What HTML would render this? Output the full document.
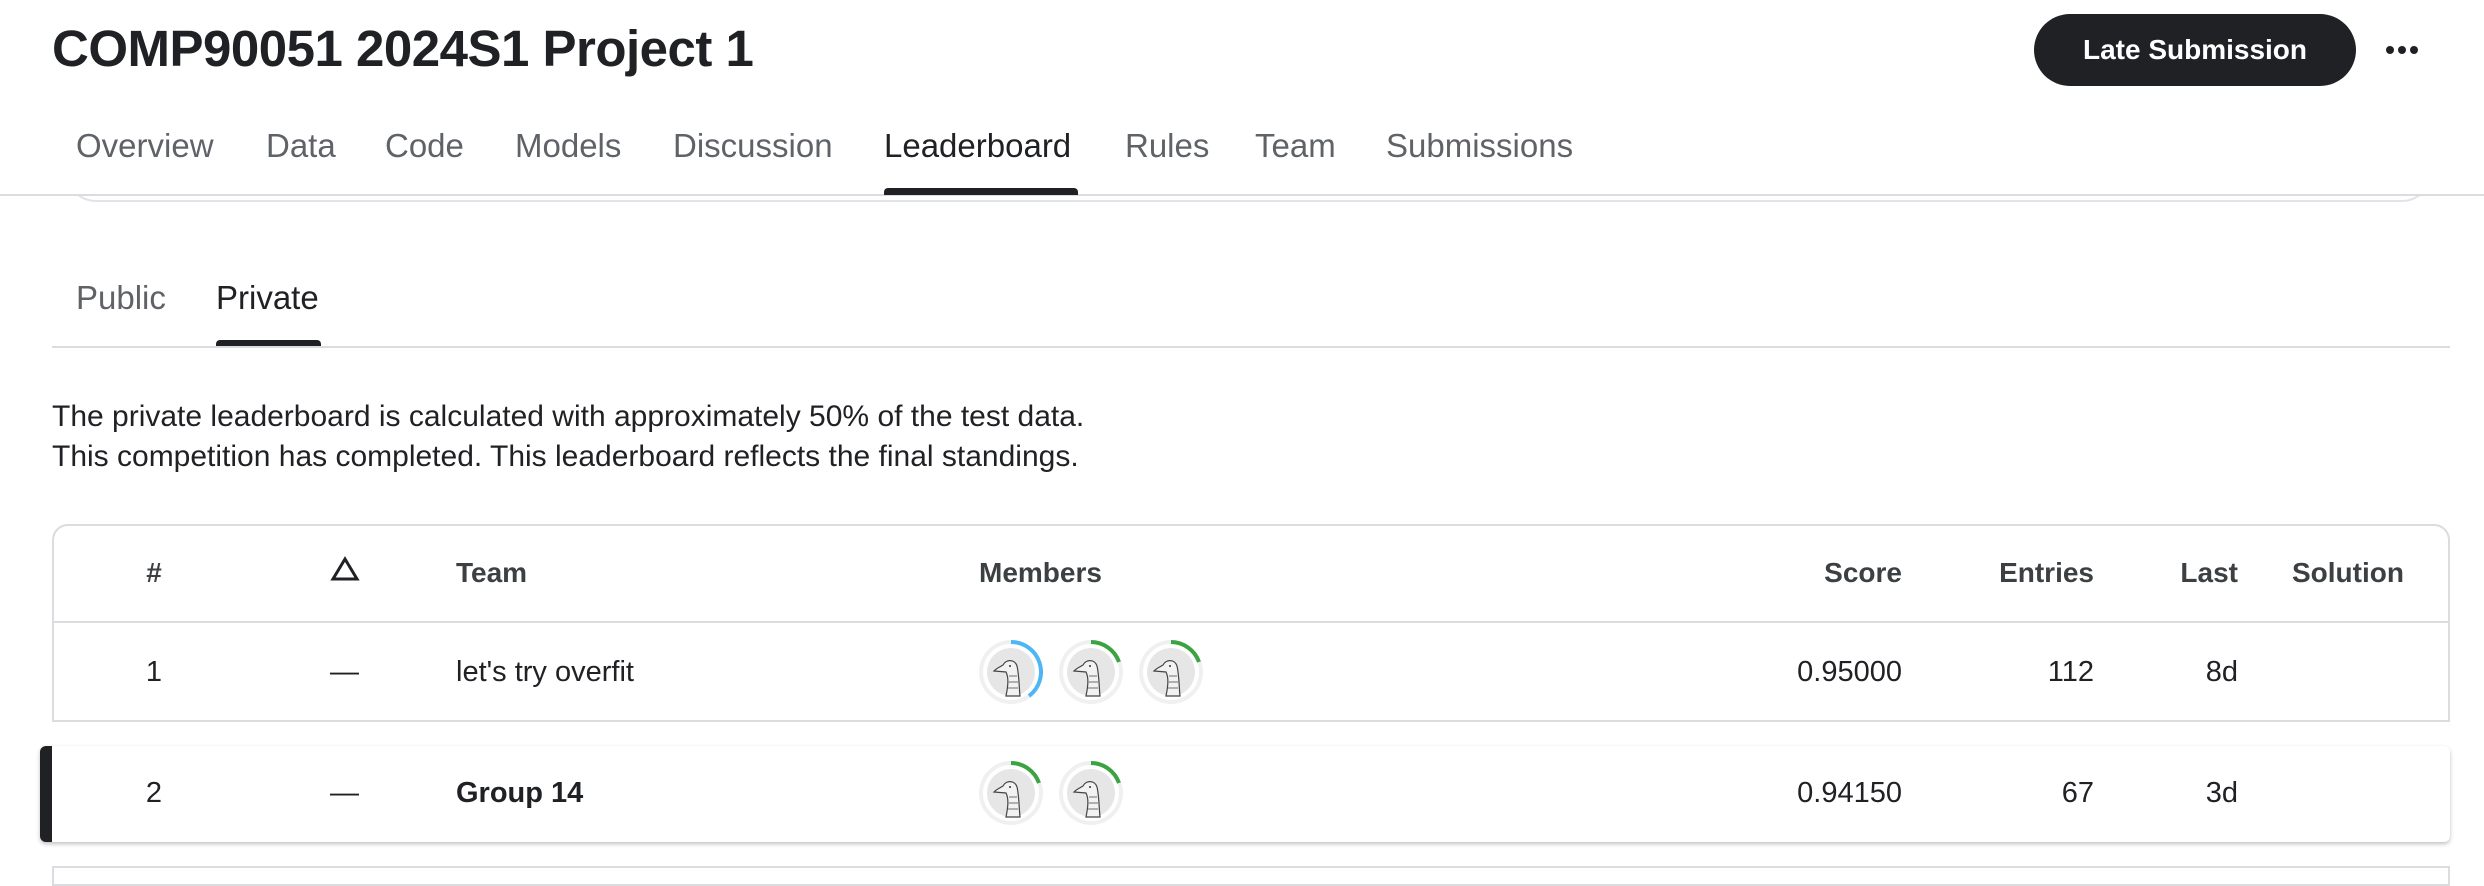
<!DOCTYPE html>
<html><head><meta charset="utf-8"><style>
*{margin:0;padding:0;box-sizing:border-box}
body{width:2484px;height:878px;background:#fff;font-family:"Liberation Sans",Arial,sans-serif;color:#202124;position:relative;overflow:hidden}
.a{position:absolute;white-space:nowrap}
.tab{position:absolute;top:126px;font-size:33px;color:#5f6368;line-height:40px}
.c{position:absolute;font-size:29px;line-height:34px}
.h{font-weight:bold;color:#3c4043;font-size:28px}
.r{text-align:right}
.av{position:absolute;width:64px;height:64px}
</style></head><body>
<div class="a" style="left:66px;top:168px;width:2366px;height:34px;border:2px solid #e2e3e6;border-top:none;border-radius:0 0 30px 30px"></div>
<div class="a" style="left:0;top:160px;width:2484px;height:35px;background:#fff"></div>
<div class="a" style="left:0;top:194px;width:2484px;height:2px;background:#dadce0"></div>

<div class="a" style="left:52px;top:19px;font-size:51px;font-weight:bold;letter-spacing:-0.5px;line-height:60px">COMP90051 2024S1 Project 1</div>
<div class="a" style="left:2034px;top:14px;width:322px;height:72px;border-radius:36px;background:#202124;color:#fff;font-weight:bold;font-size:28px;line-height:72px;text-align:center">Late Submission</div>
<div class="a" style="left:2386px;top:46px;width:8px;height:8px;border-radius:4px;background:#202124"></div>
<div class="a" style="left:2398px;top:46px;width:8px;height:8px;border-radius:4px;background:#202124"></div>
<div class="a" style="left:2410px;top:46px;width:8px;height:8px;border-radius:4px;background:#202124"></div>

<div class="tab" style="left:76px">Overview</div>
<div class="tab" style="left:266px">Data</div>
<div class="tab" style="left:385px">Code</div>
<div class="tab" style="left:515px">Models</div>
<div class="tab" style="left:673px">Discussion</div>
<div class="tab" style="left:884px;color:#202124">Leaderboard</div>
<div class="tab" style="left:1125px">Rules</div>
<div class="tab" style="left:1255px">Team</div>
<div class="tab" style="left:1386px">Submissions</div>
<div class="a" style="left:884px;top:188px;width:194px;height:7px;background:#202124;border-radius:4px 4px 0 0"></div>

<div class="tab" style="left:76px;top:278px">Public</div>
<div class="tab" style="left:216px;top:278px;color:#202124">Private</div>
<div class="a" style="left:216px;top:340px;width:105px;height:7px;background:#202124;border-radius:4px 4px 0 0"></div>
<div class="a" style="left:52px;top:346px;width:2398px;height:2px;background:#dadce0"></div>

<div class="a" style="left:52px;top:397px;font-size:30px;line-height:40px">The private leaderboard is calculated with approximately 50% of the test data.<br>This competition has completed. This leaderboard reflects the final standings.</div>

<div class="a" style="left:52px;top:524px;width:2398px;height:198px;border:2px solid #dadce0;border-radius:16px 16px 0 0"></div>
<div class="a" style="left:52px;top:621px;width:2398px;height:2px;background:#dadce0"></div>
<div class="a" style="left:40px;top:746px;width:2410px;height:96px;background:#fff;border-radius:6px;box-shadow:0 2px 4px rgba(0,0,0,.25);border-left:12px solid #202124"></div>
<div class="a" style="left:52px;top:866px;width:2398px;height:20px;border:2px solid #dadce0"></div>

<div class="c h" style="left:124px;top:556px;width:60px;text-align:center">#</div>
<svg class="a" style="left:330px;top:556px" width="30" height="26" viewBox="0 0 30 26"><path d="M15 3 L27 23 L3 23 Z" fill="none" stroke="#202124" stroke-width="3"/></svg>
<div class="c h" style="left:456px;top:556px">Team</div>
<div class="c h" style="left:979px;top:556px">Members</div>
<div class="c h r" style="left:1700px;width:202px;top:556px">Score</div>
<div class="c h r" style="left:1900px;width:194px;top:556px">Entries</div>
<div class="c h r" style="left:2100px;width:138px;top:556px">Last</div>
<div class="c h" style="left:2292px;top:556px">Solution</div>

<div class="c" style="left:124px;top:655px;width:60px;text-align:center">1</div>
<div class="c" style="left:330px;top:655px">—</div>
<div class="c" style="left:456px;top:655px">let's try overfit</div>
<div class="c r" style="left:1700px;width:202px;top:655px">0.95000</div>
<div class="c r" style="left:1900px;width:194px;top:655px">112</div>
<div class="c r" style="left:2100px;width:138px;top:655px">8d</div>

<div class="c" style="left:124px;top:776px;width:60px;text-align:center">2</div>
<div class="c" style="left:330px;top:776px">—</div>
<div class="c" style="left:456px;top:776px;font-weight:bold">Group 14</div>
<div class="c r" style="left:1700px;width:202px;top:776px">0.94150</div>
<div class="c r" style="left:1900px;width:194px;top:776px">67</div>
<div class="c r" style="left:2100px;width:138px;top:776px">3d</div>

<svg width="0" height="0" style="position:absolute"><defs>
<g id="goose"><circle cx="32" cy="32" r="24" fill="#e6e6e6"/><path d="M27 56 C29 46 30 38 27 32 L15 31 C18 28 21 27 24 25 C27 19 36 19 38 26 C40 34 40 46 41 56 Z" fill="#f2f2f2" stroke="#444" stroke-width="1.2"/><path d="M30 36 L38 36 M29 42 L39 42 M29 48 L39 48" stroke="#999" stroke-width="1.5"/><circle cx="31" cy="26" r="1" fill="#333"/></g>
</defs></svg>
<svg class="av" style="left:979px;top:640px" viewBox="0 0 64 64"><circle cx="32" cy="32" r="30" fill="none" stroke="#eef0f2" stroke-width="4"/><path d="M32 2 A30 30 0 0 1 50 56" fill="none" stroke="#4db6f5" stroke-width="4"/><use href="#goose"/></svg>
<svg class="av" style="left:1059px;top:640px" viewBox="0 0 64 64"><circle cx="32" cy="32" r="30" fill="none" stroke="#eef0f2" stroke-width="4"/><path d="M32 2 A30 30 0 0 1 60 22" fill="none" stroke="#3ca342" stroke-width="4"/><use href="#goose"/></svg>
<svg class="av" style="left:1139px;top:640px" viewBox="0 0 64 64"><circle cx="32" cy="32" r="30" fill="none" stroke="#eef0f2" stroke-width="4"/><path d="M32 2 A30 30 0 0 1 60 22" fill="none" stroke="#3ca342" stroke-width="4"/><use href="#goose"/></svg>
<svg class="av" style="left:979px;top:761px" viewBox="0 0 64 64"><circle cx="32" cy="32" r="30" fill="none" stroke="#eef0f2" stroke-width="4"/><path d="M32 2 A30 30 0 0 1 60 22" fill="none" stroke="#3ca342" stroke-width="4"/><use href="#goose"/></svg>
<svg class="av" style="left:1059px;top:761px" viewBox="0 0 64 64"><circle cx="32" cy="32" r="30" fill="none" stroke="#eef0f2" stroke-width="4"/><path d="M32 2 A30 30 0 0 1 60 22" fill="none" stroke="#3ca342" stroke-width="4"/><use href="#goose"/></svg>
</body></html>
